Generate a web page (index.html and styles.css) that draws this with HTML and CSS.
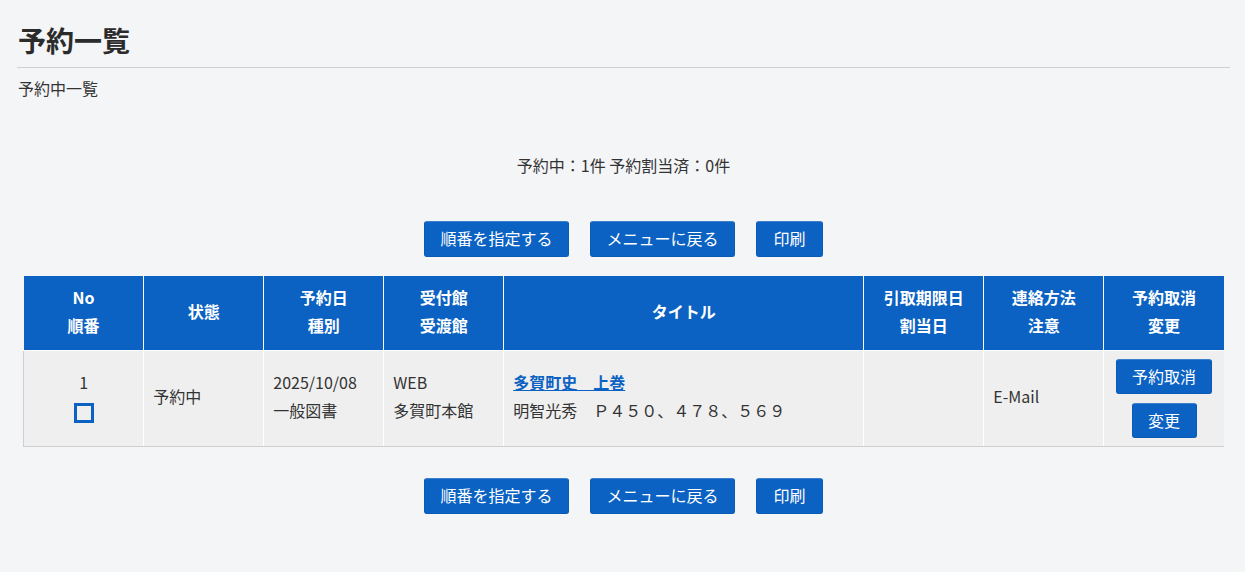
FILE: index.html
```html
<!DOCTYPE html>
<html lang="ja">
<head>
<meta charset="utf-8">
<title>予約一覧</title>
<link rel="stylesheet" href="styles.css">
</head>
<body>
<div class="page">
  <h1 class="title">予約一覧</h1>
  <p class="sub">予約中一覧</p>
  <p class="summary">予約中：1件 予約割当済：0件</p>
  <div class="actions">
    <button class="btn btn-wide">順番を指定する</button>
    <button class="btn btn-wide">メニューに戻る</button>
    <button class="btn btn-small">印刷</button>
  </div>
  <table class="list">
    <colgroup>
      <col class="c1"><col class="c1"><col class="c1"><col class="c1">
      <col class="c3"><col class="c1"><col class="c1"><col class="c1">
    </colgroup>
    <thead>
      <tr>
        <th>No<br>順番</th>
        <th>状態</th>
        <th>予約日<br>種別</th>
        <th>受付館<br>受渡館</th>
        <th>タイトル</th>
        <th>引取期限日<br>割当日</th>
        <th>連絡方法<br>注意</th>
        <th>予約取消<br>変更</th>
      </tr>
    </thead>
    <tbody>
      <tr>
        <td class="center"><div>1</div><span class="check"></span></td>
        <td>予約中</td>
        <td>2025/10/08<br>一般図書</td>
        <td>WEB<br>多賀町本館</td>
        <td><a class="book" href="#">多賀町史　上巻</a><br>明智光秀　Ｐ４５０、４７８、５６９</td>
        <td></td>
        <td>E-Mail</td>
        <td class="center cell-ops">
          <div class="ops">
            <button class="btn btn-cell">予約取消</button>
            <button class="btn btn-cell btn-cell-s">変更</button>
          </div>
        </td>
      </tr>
    </tbody>
  </table>
  <div class="actions actions-bottom">
    <button class="btn btn-wide">順番を指定する</button>
    <button class="btn btn-wide">メニューに戻る</button>
    <button class="btn btn-small">印刷</button>
  </div>
</div>
</body>
</html>
```
FILE: styles.css
```css
html, body {
  margin: 0;
  padding: 0;
  background: #f4f5f7;
}
body {
  font-family: "Noto Sans CJK JP", "Noto Sans", sans-serif;
  color: #333;
  font-size: 16px;
}
.page {
  padding: 20px 15px 40px 17px;
}
.title {
  margin: 0;
  padding: 0 1px 7px;
  font-size: 28px;
  font-weight: bold;
  line-height: 40px;
  border-bottom: 1px solid #cfd0d3;
  color: #2b2b2b;
}
.sub {
  margin: 0;
  padding: 9px 1px 1px;
  line-height: 22px;
  font-size: 16px;
}
.summary {
  margin: 0;
  padding-top: 54px;
  text-align: center;
  font-size: 16px;
  line-height: 22px;
}
.actions {
  display: flex;
  justify-content: center;
  gap: 21px;
  margin-top: 45px;
}
.actions-bottom {
  margin-top: 31px;
}
.btn {
  font-family: "Noto Sans CJK JP", "Noto Sans", sans-serif;
  background: #0b62c2;
  color: #fff;
  border: 1px solid #0a5bb5;
  border-top-color: #3c80cc;
  border-radius: 3px;
  font-size: 16px;
  height: 36px;
  padding: 0 0 2px;
  cursor: pointer;
}
.btn-wide { width: 145px; }
.btn-small { width: 67px; }
.list {
  width: 1200px;
  margin: 19px auto 0;
  border-collapse: collapse;
  table-layout: fixed;
}
.c1 { width: 120px; }
.c3 { width: 360px; }
.list th {
  background: #0b62c2;
  color: #fff;
  font-weight: bold;
  font-size: 16px;
  line-height: 28px;
  height: 70px;
  padding: 0 0 4px;
  border: 1px solid #fff;
  border-top: none;
  text-align: center;
}
.list th:first-child { border-left: none; }
.list th:last-child { border-right: none; }
.list td {
  background: #efefef;
  font-size: 16px;
  line-height: 28px;
  height: 89px;
  padding: 0 9px 6px;
  border-left: 1px solid #fff;
  border-right: 1px solid #fff;
  border-bottom: 1px solid #cfcfcf;
  vertical-align: middle;
}
.list td:first-child { border-left: 1px solid #cfcfcf; }
.list td:last-child { border-right: none; }
.list td.center { text-align: center; }
.list td.cell-ops { padding: 0 9px; height: 95px; }
.check {
  display: block;
  width: 14px;
  height: 14px;
  border: 3px solid #0b62c2;
  margin: 7px auto 0;
}
.book {
  color: #0b62c2;
  font-weight: bold;
  text-decoration: underline;
}
.ops {
  display: flex;
  flex-direction: column;
  align-items: center;
  gap: 9px;
}
.btn-cell {
  width: 96px;
  height: 35px;
}
.btn-cell-s { width: 65px; }
```
